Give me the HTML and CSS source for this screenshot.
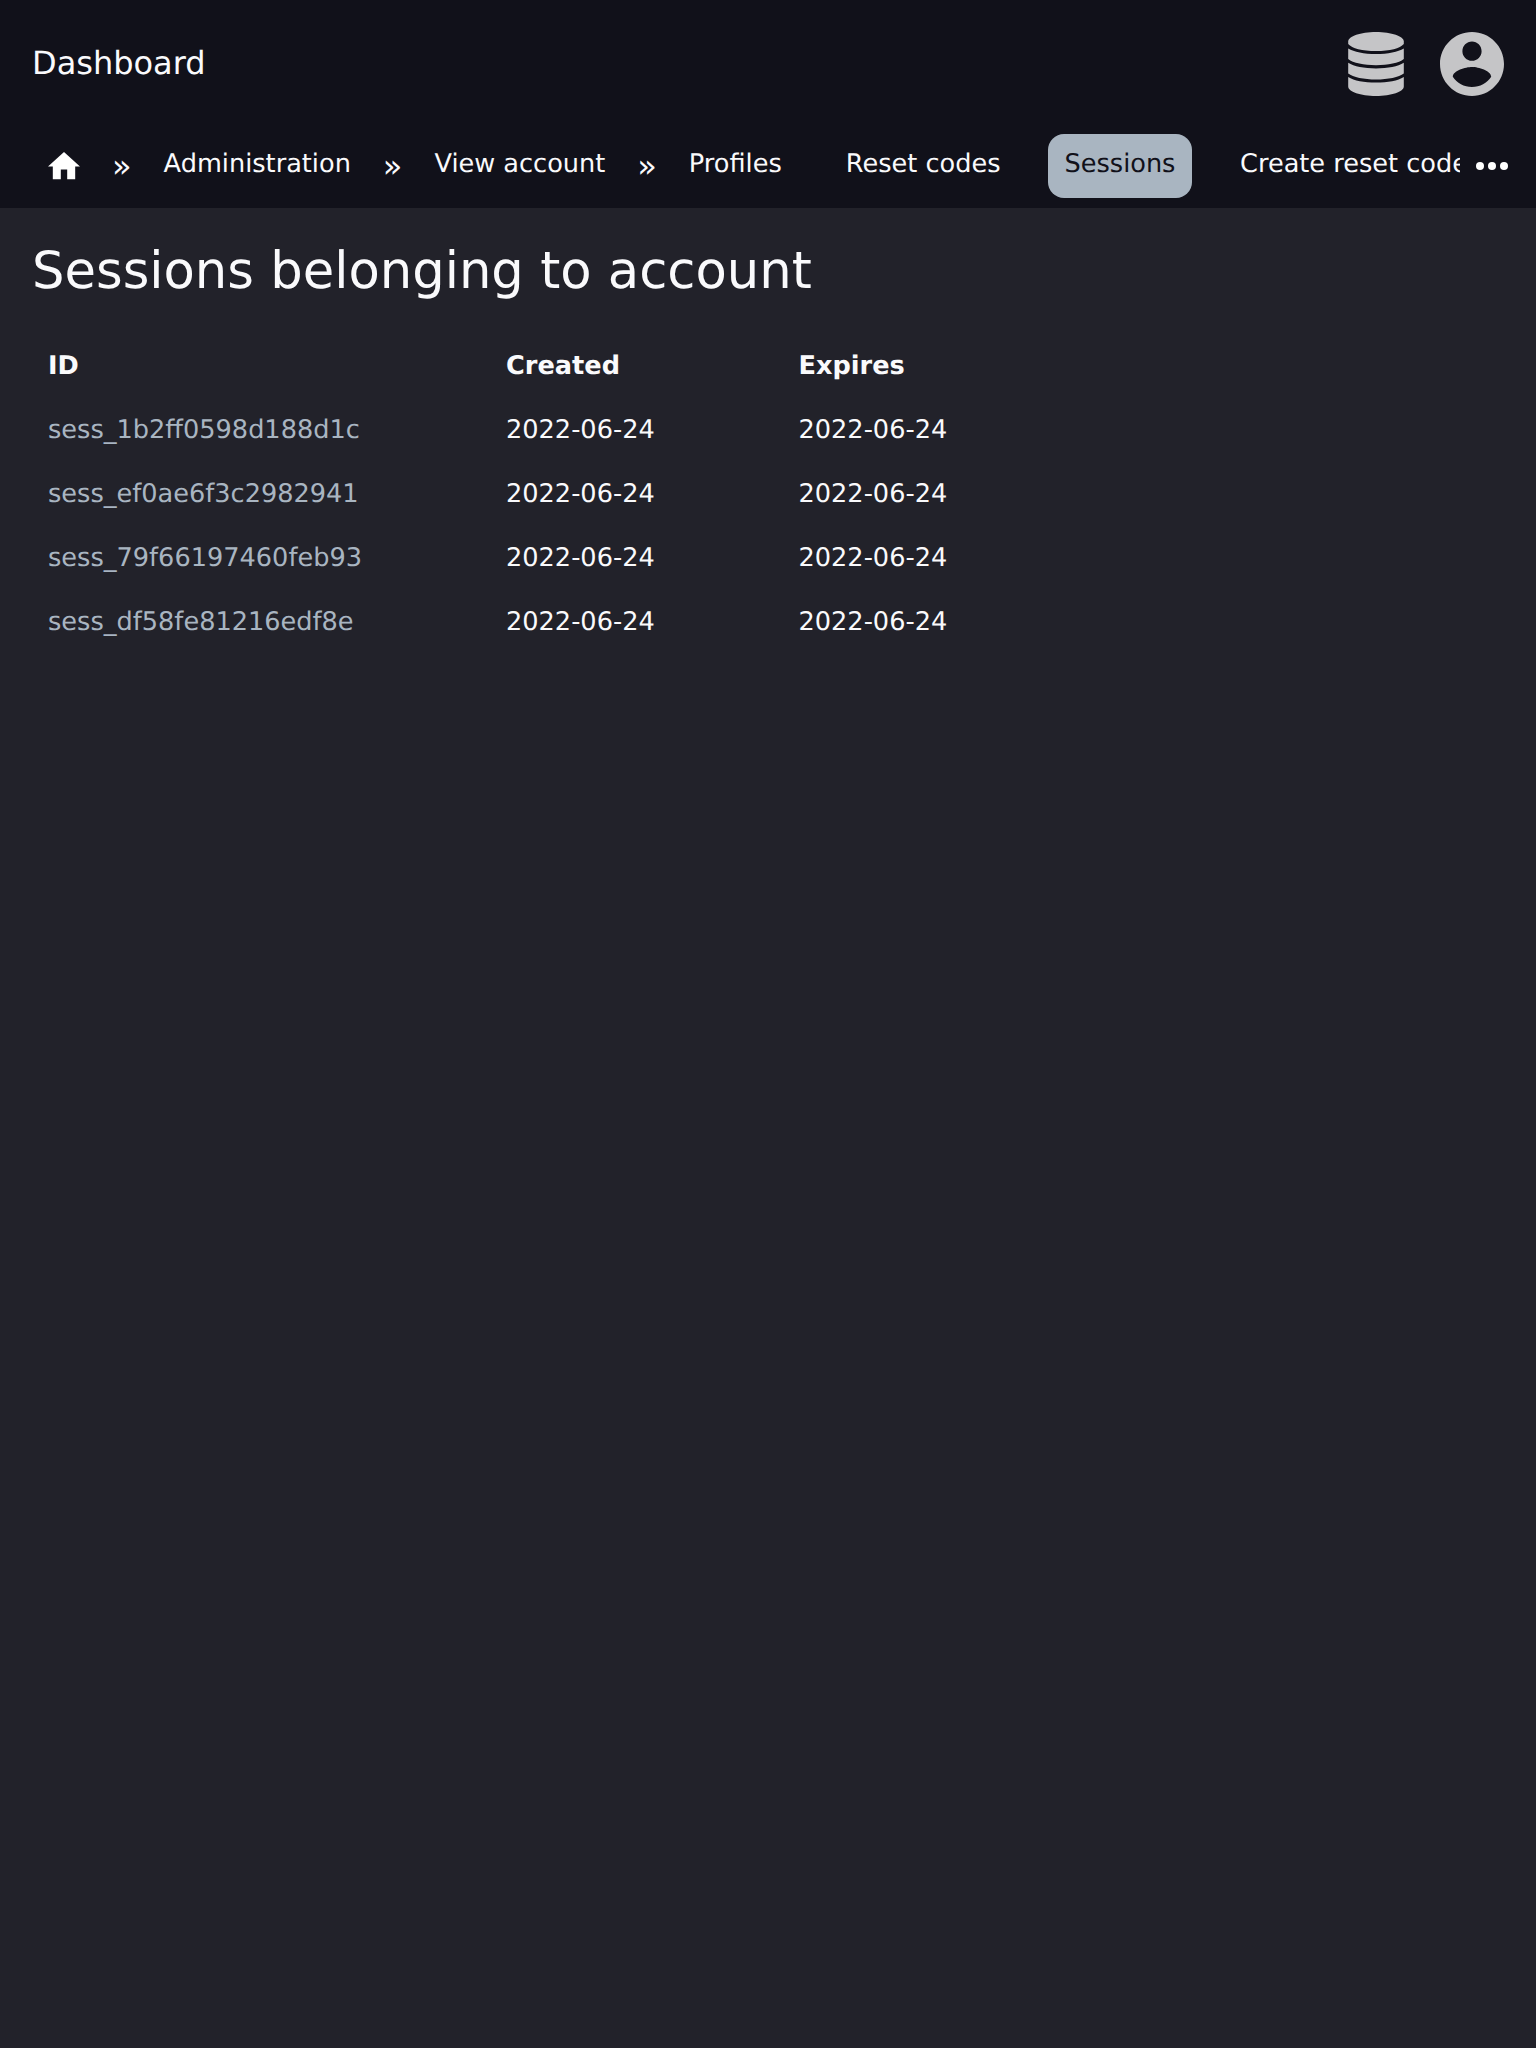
FILE: index.html
```html
<!DOCTYPE html>
<html lang="en">
<head>
<meta charset="utf-8">
<title>Sessions belonging to account</title>
<link rel="stylesheet" href="styles.css">
</head>
<body>
<header class="header">
  <div class="topbar">
    <a class="brand" href="#">Dashboard</a>
    <div class="actions">
      <svg class="icon-db" viewBox="0 0 56 64" aria-label="Database">
        <path d="M28 0C43.500 0 55.800 4.300 55.800 9.500V12C52 16.500 42 19 28 19S4 16.500 .2 12V9.500C.2 4.300 12.500 0 28 0Z"/>
        <path d="M.2 16.500C6 20 16 22 28 22S50 20 55.800 16.500V27C51 31 40 33.200 28 33.200S5 31 .2 27Z"/>
        <path d="M.2 30.700C6 34.400 16 36.400 28 36.400S50 34.400 55.800 30.700V41.500C51 45.300 40 47.500 28 47.500S5 45.300 .2 41.500Z"/>
        <path d="M.2 44.900C6 48.600 16 50.600 28 50.600S50 48.600 55.800 44.900V54.500C55.800 59.700 43.500 64 28 64S.2 59.700 .2 54.500Z"/>
      </svg>
      <svg class="icon-user" viewBox="2 2 20 20" aria-label="Account">
        <path d="M12 2C6.480 2 2 6.480 2 12s4.480 10 10 10 10-4.480 10-10S17.520 2 12 2zm0 3c1.660 0 3 1.340 3 3s-1.340 3-3 3-3-1.340-3-3 1.340-3 3-3zm0 14.200c-2.500 0-4.710-1.280-6-3.220.030-1.990 4-3.080 6-3.080 1.990 0 5.970 1.090 6 3.080-1.290 1.940-3.500 3.220-6 3.220z"/>
      </svg>
    </div>
  </div>
  <div class="navbar">
    <nav class="crumbs">
      <a class="item home" href="#"><svg class="icon-home" viewBox="2 3 20 17"><path d="M10 20v-6h4v6h5v-8h3L12 3 2 12h3v8z"/></svg></a>
      <span class="sep">»</span>
      <a class="item" href="#">Administration</a>
      <span class="sep">»</span>
      <a class="item" href="#">View account</a>
      <span class="sep">»</span>
      <div class="group">
        <a class="item" href="#">Profiles</a>
        <a class="item" href="#">Reset codes</a>
        <a class="item active" href="#">Sessions</a>
        <a class="item" href="#">Create reset code</a>
      </div>
    </nav>
    <svg class="icon-more" viewBox="4 10 16 4"><circle cx="6" cy="12" r="2"/><circle cx="12" cy="12" r="2"/><circle cx="18" cy="12" r="2"/></svg>
  </div>
</header>
<main class="content">
  <h1 class="title">Sessions belonging to account</h1>
  <table class="table">
    <thead><tr><th class="col-id">ID</th><th class="col-created">Created</th><th class="col-expires">Expires</th></tr></thead>
    <tbody>
      <tr><td><a class="link" href="#">sess_1b2ff0598d188d1c</a></td><td>2022-06-24</td><td>2022-06-24</td></tr>
      <tr><td><a class="link" href="#">sess_ef0ae6f3c2982941</a></td><td>2022-06-24</td><td>2022-06-24</td></tr>
      <tr><td><a class="link" href="#">sess_79f66197460feb93</a></td><td>2022-06-24</td><td>2022-06-24</td></tr>
      <tr><td><a class="link" href="#">sess_df58fe81216edf8e</a></td><td>2022-06-24</td><td>2022-06-24</td></tr>
    </tbody>
  </table>
</main>
</body>
</html>
```
FILE: styles.css
```css
* { box-sizing: border-box; }
body {
  margin: 0;
  min-height: 2048px;
  background: #22222a;
  color: #fafafc;
  font-family: "DejaVu Sans", sans-serif;
  font-size: 25.6px;
  text-rendering: geometricPrecision;
}
a { color: inherit; text-decoration: none; }
svg { display: block; flex: none; }
.header { height: 208px; background: #11111a; }
.topbar {
  height: 128px;
  padding: 0 32px;
  display: flex;
  align-items: center;
  justify-content: space-between;
}
.brand { font-size: 32px; line-height: 38px; padding-bottom: 2px; }
.actions { display: flex; gap: 36px; fill: #c5c5c7; }
.icon-db { width: 56px; height: 64px; }
.icon-user { width: 64px; height: 64px; }
.navbar {
  height: 80px;
  padding: 6px 28px 10px 32px;
  display: flex;
  align-items: center;
}
.crumbs {
  flex: 1;
  min-width: 0;
  height: 64px;
  overflow: hidden;
  display: flex;
  white-space: nowrap;
}
.item {
  flex: none;
  height: 64px;
  padding: 0 16px;
  line-height: 60px;
  border-radius: 16px;
}
.home { display: flex; align-items: center; }
.icon-home { width: 32px; height: 27.2px; fill: #fff; }
.sep { flex: none; padding: 0 16px; font-size: 32px; line-height: 64px; }
.group { display: flex; gap: 32px; flex: none; }
.active { width: 143.6px; background: #a9b5c1; color: #11111a; }
.icon-more { width: 32px; height: 8px; margin-left: 16px; fill: #fff; }
.content { padding: 33px 32px 32px; }
.title { margin: 0 0 33px; font-size: 51.2px; line-height: 60px; font-weight: 400; }
.table { border-collapse: collapse; table-layout: fixed; width: 951px; }
.col-id { width: 458px; }
.col-created { width: 292.5px; }
.table th, .table td { height: 64px; padding: 0 16px; text-align: left; vertical-align: middle; line-height: 30px; white-space: nowrap; }
.link { color: #a9b5c1; }
```
